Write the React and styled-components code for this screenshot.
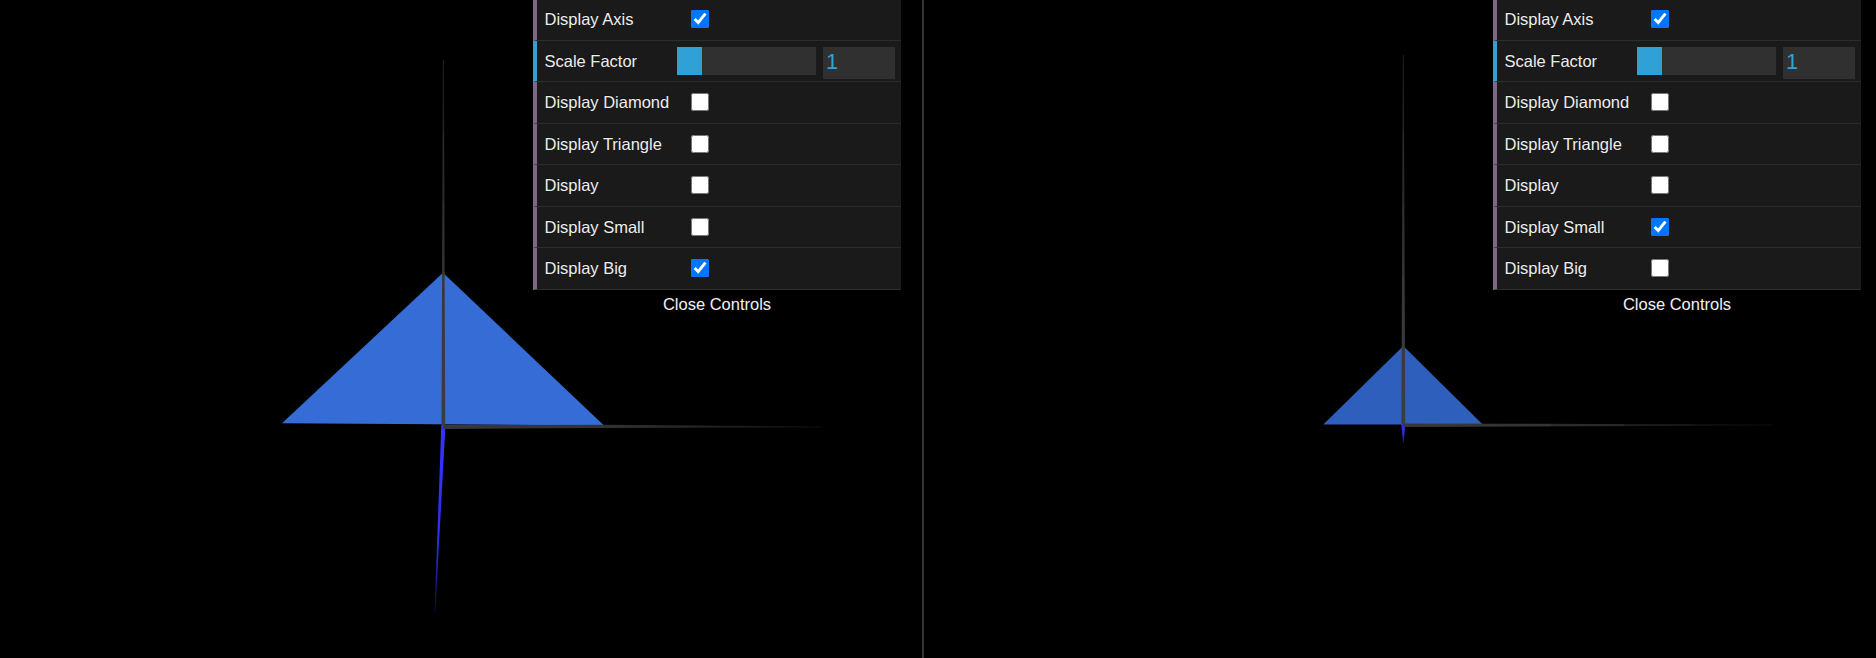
import React from 'react';
import styled, { createGlobalStyle } from 'styled-components';

const GlobalStyle = createGlobalStyle`
  html, body {
    margin: 0;
    padding: 0;
    height: 100%;
    background: #000;
    overflow: hidden;
  }
`;

const Page = styled.div`
  display: flex;
  width: 1876px;
  height: 658px;
  background: #000;
  font-family: "Liberation Sans", Arial, sans-serif;
`;

const View = styled.div`
  position: relative;
  flex: ${props => (props.$grow ? '1' : `0 0 ${props.$width}px`)};
  height: 100%;
  overflow: hidden;
`;

const Divider = styled.div`
  flex: 0 0 2px;
  margin-right: 1px;
  background: #333;
`;

const Scene = styled.svg`
  display: block;
  width: 100%;
  height: 100%;
`;

const Controls = styled.div`
  position: absolute;
  top: 0;
  right: ${props => props.$right}px;
  width: 368px;
`;

const RowList = styled.ul`
  list-style: none;
  margin: -0.4px 0 0;
  padding: 0;
`;

const Row = styled.li`
  display: flex;
  align-items: center;
  box-sizing: border-box;
  height: 41.45px;
  padding-left: 7.5px;
  background: #1a1a1a;
  border-left: 4px solid ${props => (props.$number ? '#2fa1d6' : '#806787')};
  border-bottom: 1px solid #2c2c2c;
`;

const Label = styled.span`
  flex: 0 0 132px;
  color: #eee;
  font-size: 16.5px;
  text-shadow: 0 -1px 0 #111;
  white-space: nowrap;
`;

const Check = styled.input.attrs({ type: 'checkbox' })`
  width: 18px;
  height: 18px;
  margin: -1px 0 0 14.5px;
`;

const SliderTrack = styled.div`
  flex: 0 0 139px;
  height: 28px;
  margin-left: 0.5px;
  background: #303030;
`;

const SliderFill = styled.div`
  height: 100%;
  background: #2fa1d6;
`;

const NumberBox = styled.input`
  box-sizing: border-box;
  flex: 0 0 72px;
  width: 72px;
  height: 32px;
  margin: 4px 0 0 7px;
  padding: 0 4px 3px 3px;
  border: none;
  outline: none;
  background: #303030;
  color: #2fa1d6;
  font-family: inherit;
  font-size: 22px;
`;

const CloseButton = styled.div`
  height: 31px;
  line-height: 28px;
  text-align: center;
  color: #eee;
  font-size: 16.5px;
  text-shadow: 0 -1px 0 #111;
`;

const rows = [
  { name: 'Display Axis', checks: [true, true] },
  { name: 'Scale Factor', number: true },
  { name: 'Display Diamond', checks: [false, false] },
  { name: 'Display Triangle', checks: [false, false] },
  { name: 'Display', checks: [false, false] },
  { name: 'Display Small', checks: [false, true] },
  { name: 'Display Big', checks: [true, false] },
];

const ControlPanel = ({ index, right }) => (
  <Controls $right={right}>
    <RowList>
      {rows.map(row => (
        <Row key={row.name} $number={row.number}>
          <Label>{row.name}</Label>
          {row.number ? (
            <>
              <SliderTrack>
                <SliderFill style={{ width: `${(25 / 139) * 100}%` }} />
              </SliderTrack>
              <NumberBox defaultValue="1" />
            </>
          ) : (
            <Check defaultChecked={row.checks[index]} />
          )}
        </Row>
      ))}
    </RowList>
    <CloseButton>Close Controls</CloseButton>
  </Controls>
);

// stepped fade along an axis, dark far end to bright near the origin
const AxisFade = ({ id, x1, y1, x2, y2, stops }) => (
  <linearGradient id={id} gradientUnits="userSpaceOnUse" x1={x1} y1={y1} x2={x2} y2={y2}>
    {stops.map(([offset, color], i) => (
      <stop key={i} offset={offset} stopColor={color} />
    ))}
  </linearGradient>
);

const LeftScene = () => (
  <Scene viewBox="0 0 922 658">
    <defs>
      <AxisFade id="ly" x1="0" y1="60" x2="0" y2="425" stops={[[0, '#1e1e1e'], [0.2, '#242424'], [0.2, '#2a2a2a'], [0.39, '#2c2c2c'], [0.39, '#303030'], [0.58, '#333'], [0.58, '#383838'], [1, '#3a3d44']]} />
      <AxisFade id="lx" x1="443" y1="0" x2="822" y2="0" stops={[[0, '#383838'], [0.4, '#333'], [0.62, '#272727'], [0.8, '#1c1c1c'], [1, '#0e0e0e']]} />
      <AxisFade id="lz" x1="0" y1="425" x2="0" y2="612" stops={[[0, '#3333ff'], [0.6, '#2e2ef0'], [0.8, '#20209c'], [1, '#0c0c48']]} />
    </defs>
    <polygon points="443,272.7 282,423.3 604,425.5" fill="#366cd6" />
    <polygon points="441.3,425 445.5,425 438.4,555 435.4,612 434.6,612" fill="url(#lz)" />
    <polygon points="443,425 604,424.8 822,426.6 822,427.4 604,428 443,429" fill="url(#lx)" />
    <polygon points="442.9,60 443.9,60 445.2,425 441.5,425" fill="url(#ly)" />
  </Scene>
);

const RightScene = () => (
  <Scene viewBox="925 0 951 658">
    <defs>
      <AxisFade id="ry" x1="0" y1="55" x2="0" y2="424" stops={[[0, '#1e1e1e'], [0.2, '#242424'], [0.2, '#2a2a2a'], [0.4, '#2c2c2c'], [0.4, '#303030'], [0.6, '#333'], [0.6, '#383838'], [1, '#3a3d44']]} />
      <AxisFade id="rx" x1="1403" y1="0" x2="1772" y2="0" stops={[[0, '#383838'], [0.4, '#333'], [0.4, '#2c2c2c'], [0.6, '#282828'], [0.6, '#1e1e1e'], [0.79, '#1a1a1a'], [0.79, '#131313'], [1, '#0e0e0e']]} />
      <AxisFade id="rz" x1="0" y1="424" x2="0" y2="443" stops={[[0, '#3333ff'], [0.6, '#2a2ad0'], [1, '#14146a']]} />
    </defs>
    <polygon points="1403.3,346 1323.3,424.5 1482.7,424.5" fill="#2f5fbd" />
    <polygon points="1401.3,424 1405.3,424 1403.6,443 1403,443" fill="url(#rz)" />
    <polygon points="1403,423.4 1772,424.6 1772,425.4 1403,427" fill="url(#rx)" />
    <polygon points="1402.8,55 1403.8,55 1405.2,424 1401.4,424" fill="url(#ry)" />
  </Scene>
);

export default function App() {
  return (
    <>
      <GlobalStyle />
      <Page>
        <View $width={922}>
          <LeftScene />
          <ControlPanel index={0} right={21} />
        </View>
        <Divider />
        <View $grow>
          <RightScene />
          <ControlPanel index={1} right={15} />
        </View>
      </Page>
    </>
  );
}
